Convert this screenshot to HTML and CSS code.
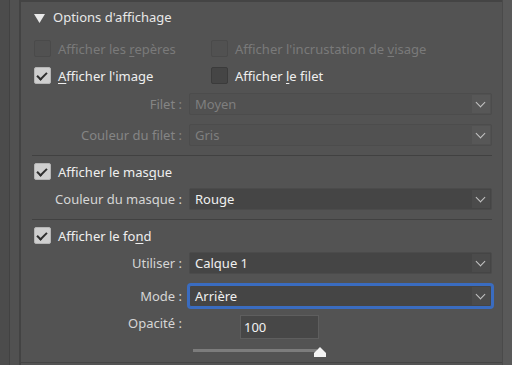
FILE: index.html
```html
<!DOCTYPE html>
<html lang="fr">
<head>
    <meta charset="UTF-8">
    <title>Options d'affichage</title>
    <link rel="stylesheet" href="styles.css">
</head>
<body>
    <div class="app">
        <div class="gutter gutter-a"></div>
        <div class="gutter gutter-b"></div>

        <div class="panel">
            <div class="section-head">
                <svg class="twisty" width="11" height="10" viewBox="0 0 11 10"><polygon points="0,1 11,1 5.5,10" fill="#e9e9e9"/></svg>
                <span>Options d'affichage</span>
            </div>

            <div class="check-row top">
                <label class="check disabled"><span class="box"></span><span>Afficher les <u>r</u>epères</span></label>
                <label class="check disabled"><span class="box"></span><span>Afficher l'incrustation de <u>v</u>isage</span></label>
            </div>
            <div class="check-row">
                <label class="check"><span class="box on"></span><span><u>A</u>fficher l'image</span></label>
                <label class="check"><span class="box"></span><span>Afficher <u>l</u>e filet</span></label>
            </div>

            <div class="field-row filet disabled">
                <span class="field-label">Filet :</span>
                <div class="select"><span>Moyen</span><span class="chev"></span></div>
            </div>
            <div class="field-row gap disabled">
                <span class="field-label">Couleur du filet :</span>
                <div class="select"><span>Gris</span><span class="chev"></span></div>
            </div>

            <div class="separator"></div>

            <div class="check-row after-sep">
                <label class="check"><span class="box on"></span><span>Afficher le mas<u>q</u>ue</span></label>
            </div>
            <div class="field-row first">
                <span class="field-label">Couleur du masque :</span>
                <div class="select"><span>Rouge</span><span class="chev"></span></div>
            </div>

            <div class="separator"></div>

            <div class="check-row after-sep">
                <label class="check"><span class="box on"></span><span>Afficher le fo<u>n</u>d</span></label>
            </div>
            <div class="field-row first">
                <span class="field-label">Utiliser :</span>
                <div class="select"><span>Calque 1</span><span class="chev"></span></div>
            </div>
            <div class="field-row mode">
                <span class="field-label">Mode :</span>
                <div class="select focused"><span>Arrière</span><span class="chev"></span></div>
            </div>
            <div class="field-row opacity">
                <span class="field-label">Opacité :</span>
                <div class="number">100</div>
            </div>
            <div class="slider">
                <div class="track"></div>
                <svg class="thumb" width="14" height="10" viewBox="0 0 14 10"><polygon points="7,0 13,6 13,10 1,10 1,6" fill="#f2f2f2"/></svg>
            </div>
        </div>

        <div class="scroll"></div>
    </div>
</body>
</html>
```

FILE: styles.css
```css
body {
    margin: 0;
    background: #535353;
    font-family: "Noto Sans", "Open Sans", sans-serif;
    font-size: 13px;
    color: #e8e8e8;
}
.app {
    display: flex;
    height: 365px;
    overflow: hidden;
}
.gutter-a {
    width: 9px;
    background: #4c4c4c;
    border-right: 1px solid #424242;
}
.gutter-b {
    width: 9px;
    background: #515151;
    border-right: 2px solid #434343;
}
.panel {
    flex: none;
    width: 458px;
    height: 360px;
    padding: 0 10px 0 13px;
    border-top: 2px solid #444444;
    border-bottom: 1px solid #444444;
}
.scroll {
    flex: 1;
    background: #595959;
    border-left: 1px solid #4a4a4a;
}

.section-head {
    height: 30px;
    display: flex;
    align-items: center;
    gap: 8px;
}
.twisty {
    margin-top: 1px;
}

.check-row {
    height: 27px;
    display: flex;
    align-items: center;
}
.check-row.top {
    margin-top: 3px;
}
.check-row.after-sep {
    margin-top: 2px;
}
.check {
    width: 177px;
    display: flex;
    align-items: center;
    gap: 7px;
    color: #efefef;
    white-space: nowrap;
}
.check u {
    text-underline-offset: 2px;
}
.check.disabled {
    color: #7a7a7a;
}
.box {
    width: 15px;
    height: 15px;
    border: 1px solid #3b3b3b;
    border-radius: 2px;
    background: #454545;
    flex: none;
    position: relative;
}
.check.disabled .box {
    background: #515151;
    border-color: #4a4a4a;
}
.box.on {
    background: #cfcfcf;
    border-color: #b5b5b5;
}
.box.on::after {
    content: "";
    position: absolute;
    left: 4px;
    top: 2px;
    width: 4px;
    height: 8px;
    border: solid #2f2f2f;
    border-width: 0 2px 2px 0;
    transform: rotate(45deg);
}

.field-row {
    display: flex;
    align-items: center;
    height: 22px;
}
.field-row.filet {
    margin-top: 4px;
}
.field-row.first {
    margin-top: 3px;
}
.field-row.gap {
    margin-top: 9px;
}
.field-row.mode {
    margin-top: 11px;
}
.field-row.opacity {
    margin-top: 8px;
    height: 24px;
    align-items: flex-start;
}
.field-label {
    width: 148px;
    text-align: right;
    padding-right: 7px;
    color: #d6d6d6;
    flex: none;
}
.field-row.disabled .field-label {
    color: #858585;
}
.select {
    flex: 1;
    height: 22px;
    box-sizing: border-box;
    background: #454545;
    border: 1px solid #4b4b4b;
    border-radius: 2px;
    display: flex;
    align-items: center;
    justify-content: space-between;
    padding-left: 5px;
    color: #f0f0f0;
}
.field-row.disabled .select {
    background: #515151;
    border-color: #4c4c4c;
    color: #7f7f7f;
}
.select.focused {
    box-shadow: 0 0 0 2px #3a6cc0;
    border-color: #3a6cc0;
}
.chev {
    width: 18px;
    height: 18px;
    margin-right: 1px;
    background: rgba(255, 255, 255, 0.035);
    position: relative;
}
.chev::after {
    content: "";
    position: absolute;
    left: 5px;
    top: 4px;
    width: 6px;
    height: 6px;
    border: solid #c4c4c4;
    border-width: 0 1.5px 1.5px 0;
    transform: rotate(45deg);
}
.field-row.opacity .field-label {
    line-height: 17px;
}
.number {
    margin-left: 51px;
    width: 79px;
    height: 24px;
    box-sizing: border-box;
    background: #474747;
    border: 1px solid #5e5e5e;
    padding-left: 3px;
    line-height: 22px;
    color: #f2f2f2;
}

.separator {
    margin-top: 9px;
    margin-left: -2px;
    height: 1px;
    background: #414141;
}

.slider {
    position: relative;
    margin: 10px 0 0 159px;
    width: 134px;
    height: 10px;
}
.track {
    position: absolute;
    left: 0;
    top: 0;
    width: 124px;
    height: 3px;
    background: #7c7c7c;
}
.thumb {
    position: absolute;
    left: 120px;
    top: -2px;
}
```
